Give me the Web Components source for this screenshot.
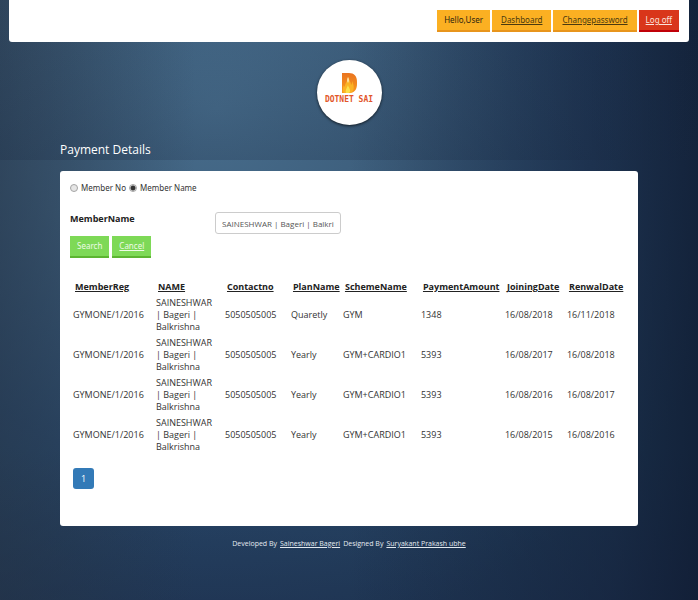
<!DOCTYPE html>
<html lang="en">
<head>
<meta charset="utf-8">
<title>Payment Details</title>
<style>
  body {
    margin: 0;
    min-height: 100vh;
    font: 9px/12px "Open Sans", "Noto Sans", sans-serif;
    color: #333;
    background:
      linear-gradient(rgba(24, 40, 64, 0), rgba(24, 40, 64, 0.22)) 0 0 / 100% 160px no-repeat,
      linear-gradient(to right, rgba(38, 50, 66, 0.5), rgba(38, 50, 66, 0) 28%),
      linear-gradient(to right, rgba(17, 28, 52, 0) 50%, rgba(17, 28, 52, 0.55) 88%, rgba(14, 24, 46, 0.75)),
      linear-gradient(rgba(28, 40, 72, 0) 75%, rgba(28, 40, 72, 0.45)),
      radial-gradient(ellipse 80% 90% at 31% 18%, #476c8b 0%, #3c5d7b 35%, #29486a 68%, #21405c 100%);
  }
</style>
</head>
<body>

<gym-page></gym-page>

<script>
// Flat button with a darker bottom edge, used in the top bar and the form
class FlatButton extends HTMLElement {
  constructor() {
    super();
    this.attachShadow({ mode: 'open' });
  }

  connectedCallback() {
    const href = this.getAttribute('href');
    const inner = href
      ? `<a class="btn" href="${href}"><slot></slot></a>`
      : `<button class="btn" type="button"><slot></slot></button>`;

    this.shadowRoot.innerHTML = `
      <style>
        :host {
          display: block;
        }
        .btn {
          display: flex;
          align-items: center;
          box-sizing: border-box;
          height: 22px;
          margin: 0;
          padding: 0 var(--btn-pad, 9px);
          border: 0;
          border-bottom: 2px solid var(--btn-edge, #e8951c);
          background: var(--btn-bg, #fbb022);
          color: var(--btn-color, #4a3a10);
          font: inherit;
          font-size: 8px;
          line-height: 12px;
          white-space: nowrap;
          cursor: pointer;
        }
      </style>
      ${inner}
    `;
  }
}
customElements.define('flat-button', FlatButton);

// White bar at the top with the user links
class TopBar extends HTMLElement {
  constructor() {
    super();
    this.attachShadow({ mode: 'open' });
    this.shadowRoot.innerHTML = `
      <style>
        :host {
          display: block;
          margin: 0 9px;
          padding: 10px;
          background: #fff;
          border-radius: 0 0 3px 3px;
          font-family: "Noto Sans", sans-serif;
        }
        nav {
          display: flex;
          justify-content: flex-end;
          gap: 2px;
        }
        .user {
          --btn-color: #2b2410;
          --btn-pad: 7px;
        }
        .off {
          --btn-bg: #d9361a;
          --btn-edge: #c00008;
          --btn-color: #fbe3dc;
          --btn-pad: 7px;
        }
      </style>
      <nav>
        <flat-button class="user">Hello,User</flat-button>
        <flat-button href="#dashboard">Dashboard</flat-button>
        <flat-button href="#password">Changepassword</flat-button>
        <flat-button class="off" href="#logoff">Log off</flat-button>
      </nav>
    `;
  }
}
customElements.define('top-bar', TopBar);

// Round logo
class SiteLogo extends HTMLElement {
  constructor() {
    super();
    this.attachShadow({ mode: 'open' });
    this.shadowRoot.innerHTML = `
      <style>
        :host {
          display: flex;
          justify-content: center;
        }
        svg {
          display: block;
          border-radius: 50%;
          background: #fff;
          box-shadow: 0 1px 3px rgba(0, 0, 0, 0.7);
        }
      </style>
      <svg width="65" height="65" viewBox="0 0 65 65" role="img" aria-label="Dotnet Sai">
        <defs>
          <linearGradient id="fire" x1="0" y1="0" x2="0" y2="1">
            <stop offset="0" stop-color="#ea7420"/>
            <stop offset="1" stop-color="#f79a1c"/>
          </linearGradient>
        </defs>
        <path d="M25 13h7c5 0 8 3 8 9v2c0 6-3 9-8 9h-7z" fill="url(#fire)"/>
        <path d="M27 33c-2-3-1-6 0-8 0 2 1 2 1 1 0-3 3-5 3-9 1 3 3 5 3 8 1-1 1-2 1-4 2 4 3 9-1 12z" fill="#fbb324"/>
        <path d="M29 33c-1-3 1-5 2-8 0 2 4 5 1 8z" fill="#fce04a"/>
        <path d="M31 17c1 2 1 4 0 6-1-2-1-4 0-6z" fill="#fff3d0"/>
        <text x="32" y="42" text-anchor="middle" font-family="DejaVu Sans Mono" font-weight="bold" font-size="8" fill="#e2562a">DOTNET SAI</text>
      </svg>
    `;
  }
}
customElements.define('site-logo', SiteLogo);

// Search form: what to search by, the name and the buttons
class MemberSearch extends HTMLElement {
  constructor() {
    super();
    this.attachShadow({ mode: 'open' });
    this.shadowRoot.innerHTML = `
      <style>
        :host {
          display: block;
        }
        .modes {
          display: flex;
          align-items: center;
          gap: 3px;
          height: 14px;
          font-family: "Noto Sans", sans-serif;
          font-size: 8px;
        }
        .modes input {
          appearance: none;
          box-sizing: border-box;
          width: 8px;
          height: 8px;
          margin: 0;
          border: 1px solid #a5a5a5;
          border-radius: 50%;
          background: #e6e6e6;
        }
        .modes input:checked {
          background: radial-gradient(circle, #333 0 2px, #e6e6e6 3px);
        }
        .field {
          display: grid;
          grid-template-columns: 26% 126px;
          margin-top: 17px;
        }
        .field label {
          padding-top: 1px;
          font-size: 9px;
          font-weight: 700;
          color: #222;
        }
        .field input {
          box-sizing: border-box;
          width: 100%;
          height: 22px;
          padding: 0 6px;
          border: 1px solid #ccc;
          border-radius: 3px;
          font: inherit;
          font-size: 8px;
          color: #555;
        }
        .actions {
          display: flex;
          gap: 3px;
          margin-top: 2px;
          font-family: "Noto Sans", sans-serif;
          --btn-bg: #7ed957;
          --btn-edge: #5cb531;
          --btn-color: #edfbe6;
          --btn-pad: 7px;
        }
      </style>
      <form>
        <div class="modes">
          <input type="radio" name="mode" id="no"><label for="no">Member No</label>
          <input type="radio" name="mode" id="name" checked><label for="name">Member Name</label>
        </div>
        <div class="field">
          <label for="member">MemberName</label>
          <input type="text" id="member" value="SAINESHWAR | Bageri | Balkri">
        </div>
        <div class="actions">
          <flat-button>Search</flat-button>
          <flat-button href="#cancel">Cancel</flat-button>
        </div>
      </form>
    `;
  }
}
customElements.define('member-search', MemberSearch);

// Grid of payments with its pager
class PaymentTable extends HTMLElement {
  constructor() {
    super();
    this.attachShadow({ mode: 'open' });
    // column name and its share of the width
    this.columns = [
      ['MemberReg', 83], ['NAME', 69], ['Contactno', 66], ['PlanName', 52],
      ['SchemeName', 78], ['PaymentAmount', 84], ['JoiningDate', 62], ['RenwalDate', 64]
    ];
    const name = 'SAINESHWAR | Bageri | Balkrishna';
    this.rows = [
      ['GYMONE/1/2016', name, '5050505005', 'Quaretly', 'GYM', '1348', '16/08/2018', '16/11/2018'],
      ['GYMONE/1/2016', name, '5050505005', 'Yearly', 'GYM+CARDIO1', '5393', '16/08/2017', '16/08/2018'],
      ['GYMONE/1/2016', name, '5050505005', 'Yearly', 'GYM+CARDIO1', '5393', '16/08/2016', '16/08/2017'],
      ['GYMONE/1/2016', name, '5050505005', 'Yearly', 'GYM+CARDIO1', '5393', '16/08/2015', '16/08/2016']
    ];
  }

  connectedCallback() {
    this.render();
  }

  render() {
    const total = this.columns.reduce((sum, c) => sum + c[1], 0);
    const cols = this.columns.map(c => `<col style="width: ${c[1] / total * 100}%">`).join('');
    const head = this.columns.map(c => `<th scope="col"><a href="#sort">${c[0]}</a></th>`).join('');
    const body = this.rows.map(r => `<tr>${r.map(v => `<td>${v}</td>`).join('')}</tr>`).join('');

    this.shadowRoot.innerHTML = `
      <style>
        :host {
          display: block;
        }
        table {
          width: 100%;
          table-layout: fixed;
          border-collapse: collapse;
        }
        th {
          padding: 0 0 0 5px;
          font-size: 9px;
          font-weight: 700;
          line-height: 16px;
          text-align: left;
          white-space: nowrap;
        }
        th a {
          color: #222;
        }
        td {
          padding: 2px 12px 2px 3px;
          vertical-align: middle;
        }
        td:not(:nth-child(2)) {
          padding-right: 0;
          white-space: nowrap;
        }
        .pager {
          display: flex;
          padding: 13px 3px 0;
        }
        .pager a {
          box-sizing: border-box;
          width: 21px;
          border-radius: 3px;
          background: #337ab7;
          color: #fff;
          line-height: 21px;
          text-align: center;
          text-decoration: none;
        }
      </style>
      <table>
        <colgroup>${cols}</colgroup>
        <thead><tr>${head}</tr></thead>
        <tbody>${body}</tbody>
      </table>
      <div class="pager"><a href="#page1">1</a></div>
    `;
  }
}
customElements.define('payment-table', PaymentTable);

class GymPage extends HTMLElement {
  constructor() {
    super();
    this.attachShadow({ mode: 'open' });
    this.shadowRoot.innerHTML = `
      <style>
        :host {
          display: block;
        }
        site-logo {
          margin-top: 18px;
        }
        main {
          margin: 16px 60px 0;
        }
        h1 {
          margin: 0 0 12px;
          font-size: 12px;
          font-weight: 400;
          line-height: 18px;
          color: #fff;
        }
        .panel {
          padding: 10px 10px 37px;
          background: #fff;
          border-radius: 3px;
        }
        payment-table {
          margin-top: 21px;
        }
        footer {
          display: flex;
          justify-content: center;
          gap: 3px;
          margin-top: 12px;
          font-size: 7px;
          color: #e4eaf0;
        }
        footer a {
          color: inherit;
        }
      </style>
      <top-bar></top-bar>
      <site-logo></site-logo>
      <main>
        <h1>Payment Details</h1>
        <div class="panel">
          <member-search></member-search>
          <payment-table></payment-table>
        </div>
      </main>
      <footer>
        <span>Developed By</span>
        <a href="#saineshwar">Saineshwar Bageri</a>
        <span>Designed By</span>
        <a href="#suryakant">Suryakant Prakash ubhe</a>
      </footer>
    `;
  }
}
customElements.define('gym-page', GymPage);
</script>
</body>
</html>
